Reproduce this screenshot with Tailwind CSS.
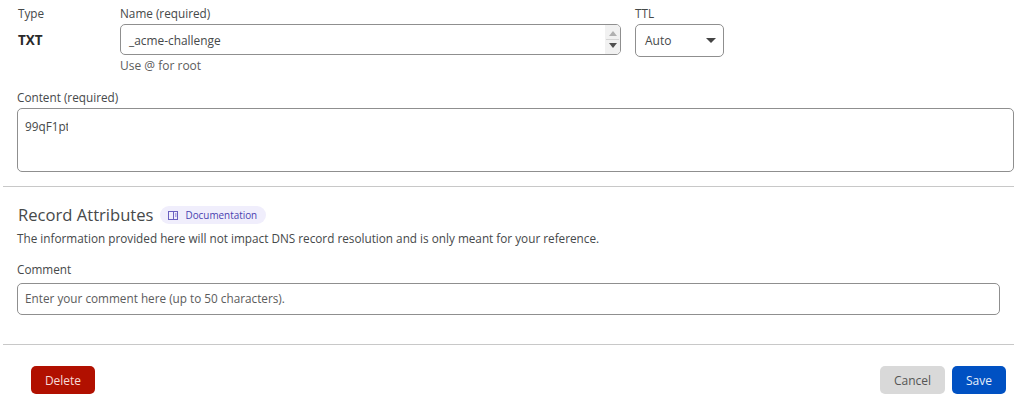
<!DOCTYPE html>
<html><head><meta charset="utf-8"><script src="https://cdn.jsdelivr.net/npm/@tailwindcss/browser@4"></script></head>
<body class="bg-white">
<div class="w-[1024px] h-[405px] overflow-hidden bg-white font-['Open_Sans',sans-serif] text-[11.75px] text-[#46494a]">
  <div class="flex pl-[18px] pt-[7px]">
    <div class="w-[102px]">
      <div class="h-[17px] leading-[13px]">Type</div>
      <div class="h-[31px] leading-[33px] text-[13.5px] font-bold text-[#2a2a2a]">TXT</div>
    </div>
    <div class="w-[501px]">
      <div class="h-[17px] leading-[13px]">Name (required)</div>
      <div class="h-[31px] flex items-center justify-between border border-[#8f8f8f] rounded-[5px] pl-2 pr-0">
        <span class="text-[11.9px] pt-[3px]">_acme-challenge</span>
        <div class="w-[15px] h-[29px] bg-[#f1f1f1] flex flex-col items-center justify-center gap-[3px] rounded-r-[4px]">
          <div class="w-0 h-0 border-x-[4px] border-x-transparent border-b-[5px] border-b-[#b0b0b0]"></div>
          <div class="w-[13px] h-px bg-[#d5d5d5]"></div>
          <div class="w-0 h-0 border-x-[4px] border-x-transparent border-t-[5px] border-t-[#505050]"></div>
        </div>
      </div>
      <div class="mt-[2px] leading-[17px] text-[12px] text-[#5c5c5c]">Use @ for root</div>
    </div>
    <div class="ml-[14px] w-[89px]">
      <div class="h-[17px] leading-[13px]">TTL</div>
      <div class="h-[33px] flex items-center justify-between border border-[#8f8f8f] rounded-[5px] pl-[9px] pr-[7px]">
        <span class="text-[12px]">Auto</span>
        <div class="w-0 h-0 border-x-[5px] border-x-transparent border-t-[5px] border-t-[#444]"></div>
      </div>
    </div>
  </div>
  <div class="ml-[17px] mt-[17px] w-[997px]">
    <div class="h-[17px] leading-[13px]">Content (required)</div>
    <div class="h-[64px] border border-[#8f8f8f] rounded-[5px] pl-[7px] pt-[9px] leading-[16px]"><div class="w-[43px] overflow-hidden whitespace-nowrap">99qF1pt</div></div>
  </div>
  <div class="ml-[3px] mt-[14px] w-[1011px] h-px bg-[#c8c8c8]"></div>
  <div class="ml-[18px] mt-[18px] flex items-center h-[20px]">
    <span class="text-[16.6px]">Record Attributes</span>
    <span class="ml-[6px] h-[18px] w-[106px] rounded-full bg-[#f0eefc] flex items-center pl-2 gap-[8px] text-[9.9px] text-[#4a3fb0]">
      <svg width="10" height="9" viewBox="0 0 10 9" fill="none" stroke="#6a60c0" stroke-width="1"><rect x="0.5" y="0.5" width="9" height="8"/><path d="M5.500 .5v8M7 3h1.500M7 5h1.500"/></svg>
      <span>Documentation</span>
    </span>
  </div>
  <div class="ml-[17px] mt-[5px] leading-[16px]">The information provided here will not impact DNS record resolution and is only meant for your reference.</div>
  <div class="ml-[17px] mt-[16px] h-[21px] leading-[15px]">Comment</div>
  <div class="ml-[17px] w-[983px] h-[32px] border border-[#8f8f8f] rounded-[5px] px-[7px] flex items-center text-[#5c5c5c]">Enter your comment here (up to 50 characters).</div>
  <div class="ml-[3px] mt-[29px] w-[1011px] h-px bg-[#c8c8c8]"></div>
  <div class="mt-[21px] pl-[31px] pr-[18px] flex justify-between">
    <button class="w-[64px] h-[28px] pt-px rounded-[5px] bg-[#b11000] text-[#f6dcd8] text-[12px]">Delete</button>
    <div class="flex gap-[7px]">
      <button class="w-[65px] h-[28px] pt-px rounded-[5px] bg-[#d9d9d9] text-[#555] text-[12px]">Cancel</button>
      <button class="w-[54px] h-[28px] pt-px rounded-[5px] bg-[#0051c3] text-[#e6eefa] text-[12px]">Save</button>
    </div>
  </div>
</div>
</body></html>
